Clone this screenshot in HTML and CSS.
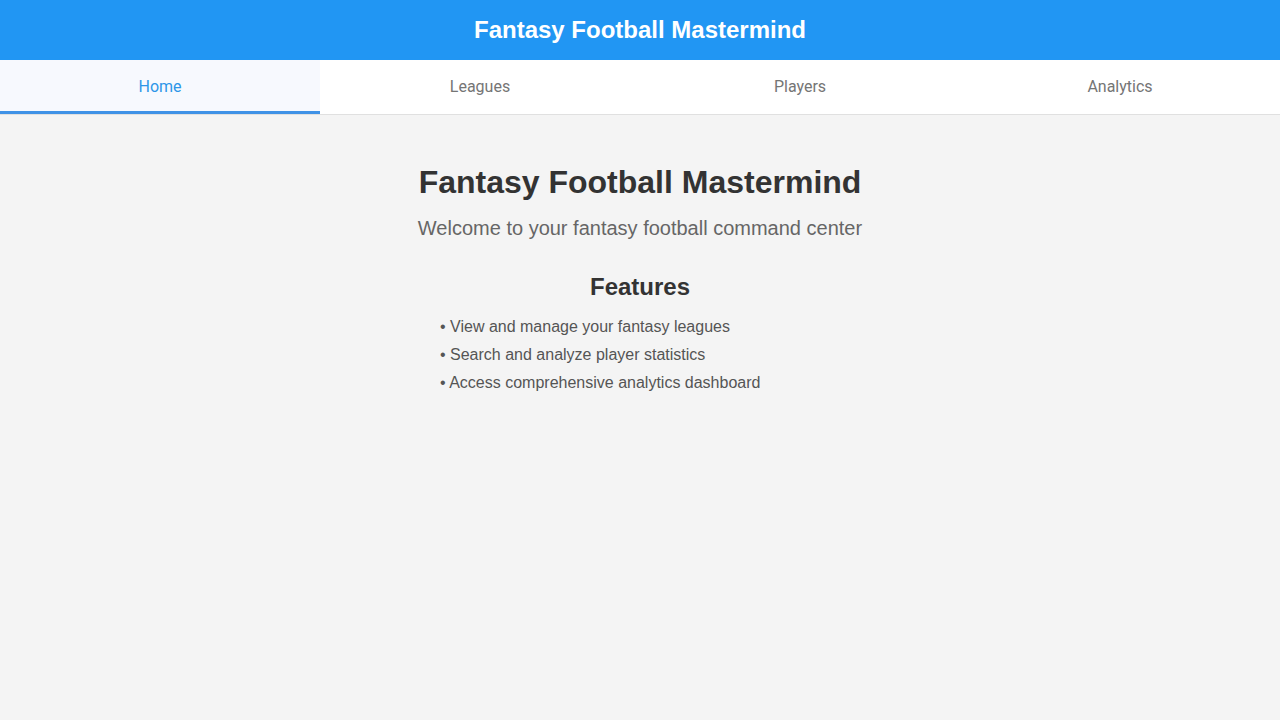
FILE: index.html
```html
<!DOCTYPE html>
<html lang="en">
<head>
<meta charset="utf-8">
<title>Fantasy Football Mastermind</title>
<link rel="stylesheet" href="styles.css">
</head>
<body>
<header class="app-header">
  <h1 class="app-title">Fantasy Football Mastermind</h1>
</header>
<nav class="tabs">
  <a class="tab tab-active">Home</a>
  <a class="tab">Leagues</a>
  <a class="tab">Players</a>
  <a class="tab">Analytics</a>
</nav>
<main class="content">
  <h2 class="hero-title">Fantasy Football Mastermind</h2>
  <p class="hero-sub">Welcome to your fantasy football command center</p>
  <section class="features">
    <h3 class="features-title">Features</h3>
    <ul class="features-list">
      <li>• View and manage your fantasy leagues</li>
      <li>• Search and analyze player statistics</li>
      <li>• Access comprehensive analytics dashboard</li>
    </ul>
  </section>
</main>
</body>
</html>
```
FILE: styles.css
```css
* { box-sizing: border-box; }
html, body { margin: 0; padding: 0; }
body {
  background: #f4f4f4;
  font-family: "Liberation Sans", Arial, sans-serif;
  min-height: 720px;
}
.app-header {
  height: 60px;
  background: #2196f3;
  display: flex;
  align-items: center;
  justify-content: center;
}
.app-title {
  margin: 0;
  color: #fff;
  font-size: 24px;
  font-weight: 700;
}
.tabs {
  display: flex;
  height: 55px;
  background: #fff;
  border-bottom: 1px solid #e0e0e0;
}
.tab {
  flex: 1;
  display: flex;
  align-items: center;
  justify-content: center;
  font-family: Roboto, "Noto Sans", sans-serif;
  font-size: 16px;
  color: #757575;
  border-bottom: 3px solid transparent;
  padding-top: 1px;
}
.tab-active {
  color: #2d96e8;
  background: #f7f9fe;
  border-bottom-color: #3f92e6;
}
.content {
  display: flex;
  flex-direction: column;
  align-items: center;
  padding-top: 47px;
}
.hero-title {
  margin: 0;
  font-size: 32px;
  line-height: 40px;
  font-weight: 700;
  color: #333;
}
.hero-sub {
  margin: 14px 0 0;
  font-size: 20px;
  line-height: 24px;
  color: #666;
}
.features {
  width: 400px;
  margin-top: 32px;
}
.features-title {
  margin: 0;
  text-align: center;
  font-size: 24px;
  line-height: 30px;
  font-weight: 700;
  color: #333;
}
.features-list {
  list-style: none;
  margin: 11px 0 0;
  padding: 0;
}
.features-list li {
  font-size: 16px;
  line-height: 28px;
  color: #555;
}
```
